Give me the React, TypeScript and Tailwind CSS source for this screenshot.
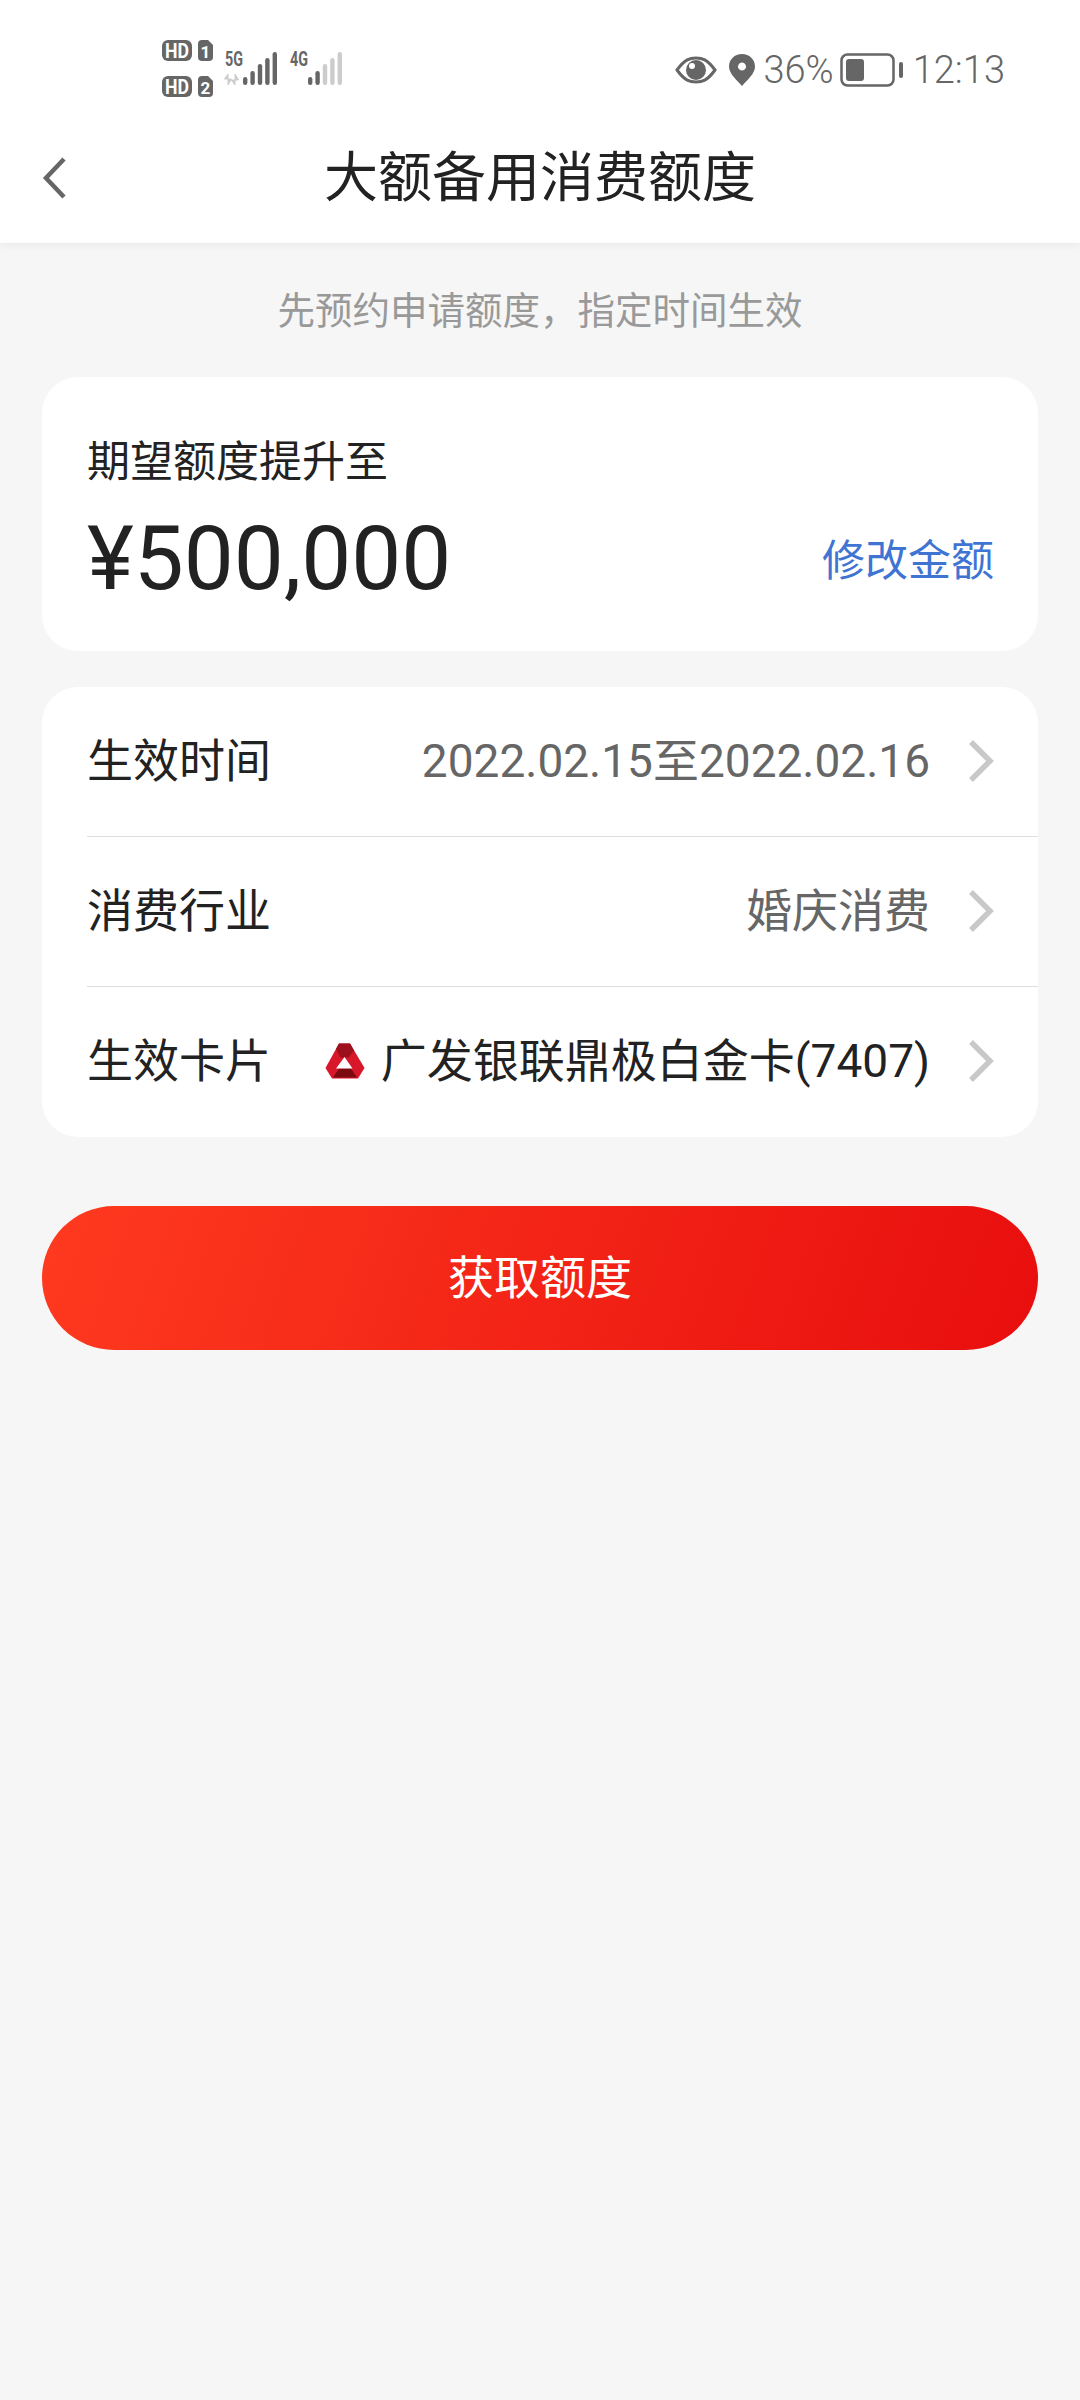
import React from "react";

function Chevron() {
  return (
    <svg width="26" height="44" viewBox="0 0 26 44" fill="none" className="shrink-0">
      <path d="M3 3 L22 22 L3 41" stroke="#c8c8c8" strokeWidth="5.5" />
    </svg>
  );
}

function LeftIcons() {
  const bars = (x0: number, dark: number) =>
    [8, 14, 21, 27, 33].map((h, i) => (
      <rect key={i} x={x0 + i * 7.4} y={49 - h} width="4.4" height={h} rx="2.2" fill={i < dark ? "#666" : "#ccc"} />
    ));
  const label = { fontWeight: 700, fontFamily: "Roboto" };
  return (
    <svg width="190" height="66" viewBox="0 0 190 66">
      <rect x="2" y="4" width="30" height="21" rx="6" fill="#666" />
      <text x="5" y="21.5" fontSize="20" fill="#fff" textLength="24" lengthAdjust="spacingAndGlyphs" {...label}>HD</text>
      <path d="M38 8 a4 4 0 0 1 4 -4 h6 l5 5 v12 a4 4 0 0 1 -4 4 h-7 a4 4 0 0 1 -4 -4 z" fill="#666" />
      <text x="45.5" y="21.5" textAnchor="middle" fontSize="17" fill="#fff" {...label}>1</text>
      <rect x="2" y="40" width="30" height="21" rx="6" fill="#666" />
      <text x="5" y="57.5" fontSize="20" fill="#fff" textLength="24" lengthAdjust="spacingAndGlyphs" {...label}>HD</text>
      <path d="M38 44 a4 4 0 0 1 4 -4 h6 l5 5 v12 a4 4 0 0 1 -4 4 h-7 a4 4 0 0 1 -4 -4 z" fill="#666" />
      <text x="45.5" y="57.5" textAnchor="middle" fontSize="17" fill="#fff" {...label}>2</text>
      <text x="65" y="30" fontSize="21" fill="#666" textLength="18" lengthAdjust="spacingAndGlyphs" {...label}>5G</text>
      <path d="M68 49 v-11 l-3.5 5 h7 z M75 38 v11 l-3.5 -5 h7 z" fill="#ccc" stroke="#ccc" strokeWidth="1" />
      {bars(83, 5)}
      <text x="130" y="30" fontSize="21" fill="#666" textLength="18" lengthAdjust="spacingAndGlyphs" {...label}>4G</text>
      {bars(148, 2)}
    </svg>
  );
}

function RightIcons() {
  return (
    <div className="flex items-center text-[38px] font-light text-[#666] leading-none">
      <svg width="42" height="28" viewBox="0 0 42 28" className="mr-[12px]">
        <path d="M2 14 C10 3 15 2 21 2 C27 2 32 3 40 14 C32 25 27 26 21 26 C15 26 10 25 2 14 Z" fill="none" stroke="#666" strokeWidth="3" />
        <circle cx="21" cy="14" r="10" fill="#666" />
        <circle cx="17" cy="10" r="3" fill="#fff" />
      </svg>
      <svg width="26" height="32" viewBox="0 0 26 32" className="mr-[8px]">
        <path fillRule="evenodd" d="M13 0 C5.5 0 0 5.5 0 12.5 C0 20 8 26 13 32 C18 26 26 20 26 12.5 C26 5.5 20.5 0 13 0 Z M13 8.5 a4 4 0 1 0 0.01 0 Z" fill="#666" />
      </svg>
      <span className="mr-[6px]">36%</span>
      <svg width="64" height="34" viewBox="0 0 64 34" className="mr-[9px]">
        <rect x="1.5" y="1.5" width="52" height="31" rx="6" fill="none" stroke="#666" strokeWidth="2.5" />
        <rect x="6" y="6" width="18" height="22" rx="3" fill="#666" />
        <rect x="59" y="9" width="4" height="16" rx="2" fill="#666" />
      </svg>
      <span>12:13</span>
    </div>
  );
}

function GfLogo() {
  return (
    <svg width="40" height="36" viewBox="0 0 40 36" className="shrink-0">
      <path d="M14 0.5 H25 L39.5 25 L33 35.5 H7 L0.5 25 Z" fill="#d8172a" />
      <path d="M14 0.5 H25 L29 7.5 L23.5 14.5 H15.5 L11 6 Z" fill="#9c0f1c" />
      <path d="M8 34.5 L14 25.5 H26 L32 34.5 Z" fill="#7a0910" />
      <path d="M19.5 14 L27.5 25.5 H11 Z" fill="#fff" />
    </svg>
  );
}

function Row({ label, children, border }: { label: string; children: React.ReactNode; border?: boolean }) {
  return (
    <div className={`flex h-[150px] items-center pr-[44px] pb-[1px] text-[46px] leading-none ${border ? "border-b border-[#dedede]" : ""}`}>
      <span className="text-[#222] shrink-0">{label}</span>
      <div className="flex-1 flex items-center justify-end gap-[38px]">
        {children}
        <Chevron />
      </div>
    </div>
  );
}

export default function App() {
  return (
    <div className="w-[1080px] h-[2400px] bg-[#f6f6f6] font-['Roboto','Noto_Sans_CJK_SC',sans-serif]">
      <header className="bg-white h-[243px] shadow-[0_2px_8px_rgba(0,0,0,0.06)] flex flex-col">
        <div className="h-[127px] flex items-start justify-between pl-[160px] pr-[75px] pt-[36px]">
          <LeftIcons />
          <div className="pt-[15px]"><RightIcons /></div>
        </div>
        <div className="flex items-center h-[104px] pl-[42px]">
          <svg width="26" height="44" viewBox="0 0 26 44" fill="none" className="shrink-0 mb-[3px]">
            <path d="M22 3 L4 22 L22 41" stroke="#666" strokeWidth="4.5" />
          </svg>
          <h1 className="flex-1 text-center text-[54px] leading-none font-normal text-[#222] pr-[68px]">大额备用消费额度</h1>
        </div>
      </header>

      <p className="text-center text-[37.5px] leading-none text-[#999] pt-[50px] pb-[46px]">先预约申请额度，指定时间生效</p>

      <main className="px-[42px] flex flex-col">
        <section className="bg-white rounded-[36px] h-[274px] pl-[45px] pr-[44px] pt-[64px]">
          <div className="text-[43px] leading-none text-[#222]">期望额度提升至</div>
          <div className="flex items-center justify-between mt-[30px]">
            <span className="text-[89px] leading-none text-[#222]">¥500,000</span>
            <span className="text-[43px] leading-none text-[#3f74d3] pt-[6px]">修改金额</span>
          </div>
        </section>

        <section className="bg-white rounded-[36px] h-[450px] pl-[45px] mt-[36px] flex flex-col">
          <Row label="生效时间" border>
            <span className="text-[#666]">2022.02.15至2022.02.16</span>
          </Row>
          <Row label="消费行业" border>
            <span className="text-[#666]">婚庆消费</span>
          </Row>
          <Row label="生效卡片">
            <div className="flex items-center gap-[16px]">
              <GfLogo />
              <span className="text-[#222]">广发银联鼎极白金卡(7407)</span>
            </div>
          </Row>
        </section>

        <button className="mt-[69px] h-[144px] rounded-full bg-[linear-gradient(110deg,#fe3a1f,#e80e0e)] text-white text-[46px] leading-none flex items-center justify-center">
          获取额度
        </button>
      </main>
    </div>
  );
}
